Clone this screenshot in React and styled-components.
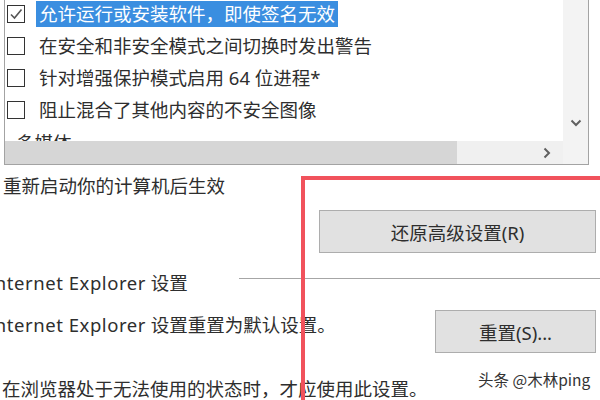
import React from 'react'
import styled, { createGlobalStyle } from 'styled-components'

const GlobalStyle = createGlobalStyle`
    body {
        margin: 0;
        background: #ffffff;
        font-family: "Noto Sans", "Noto Sans CJK SC", sans-serif;
        color: #2e2e2e;
        overflow: hidden;
    }
`

const Page = styled.div`
    position: relative;
    width: 600px;
    height: 400px;
    overflow: hidden;
    background: #fff;
`

const ListBox = styled.div`
    margin: -2px 11px 0 4px;
    height: 165px;
    border: 1px solid #a3a3a3;
    display: grid;
    grid-template-columns: 1fr 25px;
    grid-template-rows: 1fr 23px;
    background: #fff;
`

const ListBody = styled.div`
    overflow: hidden;
    margin-top: -1px;
`

const Row = styled.div`
    height: 32px;
    display: flex;
    align-items: center;
    padding-left: ${p => (p.$heading ? '11px' : '2px')};
    font-size: 18.5px;
    white-space: nowrap;
`

const Box = styled.span`
    width: 16px;
    height: 16px;
    border: 1px solid #333;
    background: #fff;
    flex: none;
    margin-right: 11px;
    display: flex;
    align-items: center;
    justify-content: center;
`

const Label = styled.span`
    padding: 1px 3px 2px;
    line-height: 23px;
    background: ${p => (p.$selected ? '#3a8ee0' : 'transparent')};
    color: ${p => (p.$selected ? '#fff' : '#2e2e2e')};
`

const VScroll = styled.div`
    background: #f3f3f3;
    display: flex;
    flex-direction: column;
    justify-content: flex-end;
    align-items: center;
    padding-bottom: 14px;
`

const HScroll = styled.div`
    background: #f0f0f0;
    display: flex;
    align-items: center;
    justify-content: space-between;
`

const Thumb = styled.div`
    width: 452px;
    height: 100%;
    background: #d6d6d6;
`

const Corner = styled.div`
    background: #f3f3f3;
`

const Section = styled.div`
    padding: 0 4px 0 3px;
    font-size: 18.5px;
    line-height: 24px;
`

const Notice = styled.div`
    margin-top: 9px;
`

const Latin = styled.span`
    letter-spacing: 0.55px;
`

const Button = styled.button`
    display: block;
    margin-left: auto;
    width: ${p => p.$w}px;
    height: 43px;
    background: #e1e1e1;
    border: 1px solid #adadad;
    font-family: inherit;
    font-size: 18.5px;
    color: #2e2e2e;
    padding: 0;
    flex: none;
`

const ResetButton = styled(Button)`
    margin-top: 12px;
`

const GroupHeader = styled.div`
    margin-top: 18px;
    margin-left: -15px;
    display: flex;
    align-items: flex-start;
`

const GroupLine = styled.div`
    flex: 1;
    height: 1px;
    background: #a6a6a6;
    margin: 7px -4px 0 51px;
`

const ResetRow = styled.div`
    display: flex;
    align-items: flex-start;
    margin-top: 15px;
    margin-left: -15px;
`

const ResetText = styled.div`
    padding-top: 3px;
`

const Warning = styled.div`
    margin-top: 24px;
    margin-left: -1px;
`

const Highlight = styled.div`
    position: absolute;
    left: 301px;
    top: 176px;
    width: 320px;
    height: 260px;
    border: 4px solid #f1525c;
`

const Watermark = styled.div`
    position: absolute;
    left: 478px;
    top: 368px;
    font-size: 15.5px;
    color: #333;
    font-family: "Noto Sans CJK SC", sans-serif;
`

const options = [
    { text: '允许运行或安装软件，即使签名无效', checked: true, selected: true },
    { text: '在安全和非安全模式之间切换时发出警告' },
    { text: '针对增强保护模式启用 64 位进程*' },
    { text: '阻止混合了其他内容的不安全图像' },
]

function Check() {
    return (
        <svg width="14" height="14" viewBox="0 0 14 14">
            <path d="M2 7.5 L5.5 11 L12.5 2.5" fill="none" stroke="#555" strokeWidth="1.6" />
        </svg>
    )
}

export default function App() {
    return (
        <Page>
            <GlobalStyle />
            <ListBox>
                <ListBody>
                    {options.map(o => (
                        <Row key={o.text}>
                            <Box>{o.checked && <Check />}</Box>
                            <Label $selected={o.selected}>{o.text}</Label>
                        </Row>
                    ))}
                    <Row $heading>多媒体</Row>
                </ListBody>
                <VScroll>
                    <svg width="12" height="8" viewBox="0 0 12 8">
                        <path d="M1.5 1.5 L6 6 L10.5 1.5" fill="none" stroke="#606060" strokeWidth="2" />
                    </svg>
                </VScroll>
                <HScroll>
                    <Thumb />
                    <svg width="8" height="12" viewBox="0 0 8 12" style={{ marginRight: 12 }}>
                        <path d="M1.5 1.5 L6 6 L1.5 10.5" fill="none" stroke="#606060" strokeWidth="2" />
                    </svg>
                </HScroll>
                <Corner />
            </ListBox>
            <Section>
                <Notice>重新启动你的计算机后生效</Notice>
                <ResetButton $w={277}>还原高级设置(R)</ResetButton>
                <GroupHeader>
                    <Latin>Internet Explorer</Latin>&nbsp;设置
                    <GroupLine />
                </GroupHeader>
                <ResetRow>
                    <ResetText><Latin>Internet Explorer</Latin> 设置重置为默认设置。</ResetText>
                    <Button $w={161}>重置(S)...</Button>
                </ResetRow>
                <Warning>在浏览器处于无法使用的状态时，才应使用此设置。</Warning>
            </Section>
            <Highlight />
            <Watermark>头条 @木林ping</Watermark>
        </Page>
    )
}
